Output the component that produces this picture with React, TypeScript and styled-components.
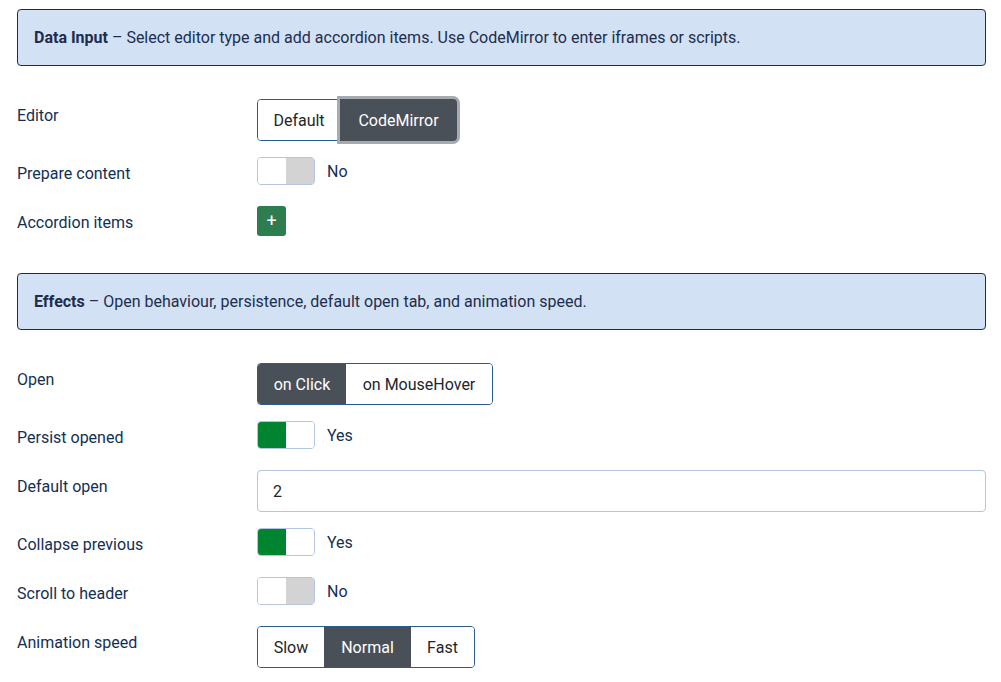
import React from "react";
import styled, { createGlobalStyle, css } from "styled-components";

const Global = createGlobalStyle`
  html, body { margin: 0; padding: 0; background: #fff; }
  body { font-family: Roboto, "Liberation Sans", sans-serif; font-size: 16px; color: #132f53; }
  * { box-sizing: border-box; }
`;

const Page = styled.div`
  padding: 9px 15px 0 17px;
`;

const Section = styled.section`
  margin-bottom: 34px;
`;

const Alert = styled.div`
  background: #d3e1f4;
  border: 1px solid #1b2d4e;
  border-radius: 4px;
  height: 57px;
  display: flex;
  align-items: center;
  padding: 0 16px;
  color: #1c2e4f;
  font-size: 16px;
  margin-bottom: 33px;
  b { font-weight: 700; }
`;

const Row = styled.div`
  display: grid;
  grid-template-columns: 240px 1fr;
  align-items: start;
  margin-bottom: 16px;
`;

const Label = styled.div`
  padding: 5px 0 4px;
  line-height: 24px;
  min-height: 33px;
  color: #132f53;
`;

const Controls = styled.div`
  display: flex;
  align-items: center;
  gap: 12px;
`;

const Group = styled.div`
  display: inline-flex;
  height: 42px;
  border: 1px solid #2b5a8c;
  border-radius: 4px;
`;

const SegButton = styled.button<{ $active?: boolean; $w: number; $ring?: boolean; $last?: boolean; $first?: boolean }>`
  all: unset;
  width: ${(p) => p.$w}px;
  display: flex;
  align-items: center;
  justify-content: center;
  font-family: Roboto, "Liberation Sans", sans-serif;
  font-size: 16px;
  color: #22262a;
  background: #fff;
  ${(p) => p.$first && css`border-radius: 3px 0 0 3px;`}
  ${(p) => p.$last && css`border-radius: 0 3px 3px 0;`}
  ${(p) =>
    p.$active &&
    css`
      background: #495057;
      color: #fff;
    `}
  ${(p) =>
    p.$ring &&
    css`
      box-shadow: 0 0 0 3px #a7abb0;
      margin: -1px -1px -1px 0;
      height: 42px;
      border-radius: 0 4px 4px 0;
    `}
`;

const Switch = styled.div<{ $on: boolean }>`
  width: 58px;
  height: 28px;
  border: 1px solid #b3c5e0;
  border-radius: 4px;
  overflow: hidden;
  display: flex;
  background: #fff;
  &::before {
    content: "";
    width: 29px;
    height: 100%;
    background: ${(p) => (p.$on ? "#00842f" : "#fff")};
  }
  &::after {
    content: "";
    width: 29px;
    height: 100%;
    background: ${(p) => (p.$on ? "#fff" : "#d3d3d3")};
  }
`;

const SwitchText = styled.span`
  color: #132f53;
  font-size: 16px;
`;

const AddButton = styled.button`
  all: unset;
  width: 29px;
  height: 30px;
  border-radius: 3px;
  background: #2e7d4f;
  color: #fff;
  display: flex;
  align-items: center;
  justify-content: center;
  font-family: Roboto, "Liberation Sans", sans-serif;
  font-size: 18px;
  line-height: 1;
`;

const TextInput = styled.input`
  width: 100%;
  height: 42px;
  border: 1px solid #b3c5e0;
  border-radius: 4px;
  padding: 0 15px;
  font-family: Roboto, "Liberation Sans", sans-serif;
  font-size: 16px;
  color: #22262a;
  outline: none;
`;

type Seg = { text: string; w: number; active?: boolean; ring?: boolean };

const Segmented = ({ items }: { items: Seg[] }) => (
  <Group>
    {items.map((s, i) => (
      <SegButton
        key={s.text}
        $w={s.w}
        $active={s.active}
        $ring={s.ring}
        $first={i === 0}
        $last={i === items.length - 1}
      >
        {s.text}
      </SegButton>
    ))}
  </Group>
);

const Toggle = ({ on }: { on: boolean }) => (
  <Controls>
    <Switch $on={on} />
    <SwitchText>{on ? "Yes" : "No"}</SwitchText>
  </Controls>
);

export default function App() {
  return (
    <Page>
      <Global />
      <Section>
        <Alert>
          <span>
            <b>Data Input</b> – Select editor type and add accordion items. Use CodeMirror to enter iframes or scripts.
          </span>
        </Alert>
        <Row>
          <Label>Editor</Label>
          <Controls>
            <Segmented
              items={[
                { text: "Default", w: 82 },
                { text: "CodeMirror", w: 117, active: true, ring: true },
              ]}
            />
          </Controls>
        </Row>
        <Row>
          <Label>Prepare content</Label>
          <Toggle on={false} />
        </Row>
        <Row>
          <Label>Accordion items</Label>
          <Controls>
            <AddButton>+</AddButton>
          </Controls>
        </Row>
      </Section>

      <Section>
        <Alert>
          <span>
            <b>Effects</b> – Open behaviour, persistence, default open tab, and animation speed.
          </span>
        </Alert>
        <Row>
          <Label>Open</Label>
          <Controls>
            <Segmented
              items={[
                { text: "on Click", w: 88, active: true },
                { text: "on MouseHover", w: 146 },
              ]}
            />
          </Controls>
        </Row>
        <Row>
          <Label>Persist opened</Label>
          <Toggle on={true} />
        </Row>
        <Row>
          <Label>Default open</Label>
          <TextInput defaultValue="2" />
        </Row>
        <Row>
          <Label>Collapse previous</Label>
          <Toggle on={true} />
        </Row>
        <Row>
          <Label>Scroll to header</Label>
          <Toggle on={false} />
        </Row>
        <Row>
          <Label>Animation speed</Label>
          <Controls>
            <Segmented
              items={[
                { text: "Slow", w: 66 },
                { text: "Normal", w: 87, active: true },
                { text: "Fast", w: 63 },
              ]}
            />
          </Controls>
        </Row>
      </Section>
    </Page>
  );
}
